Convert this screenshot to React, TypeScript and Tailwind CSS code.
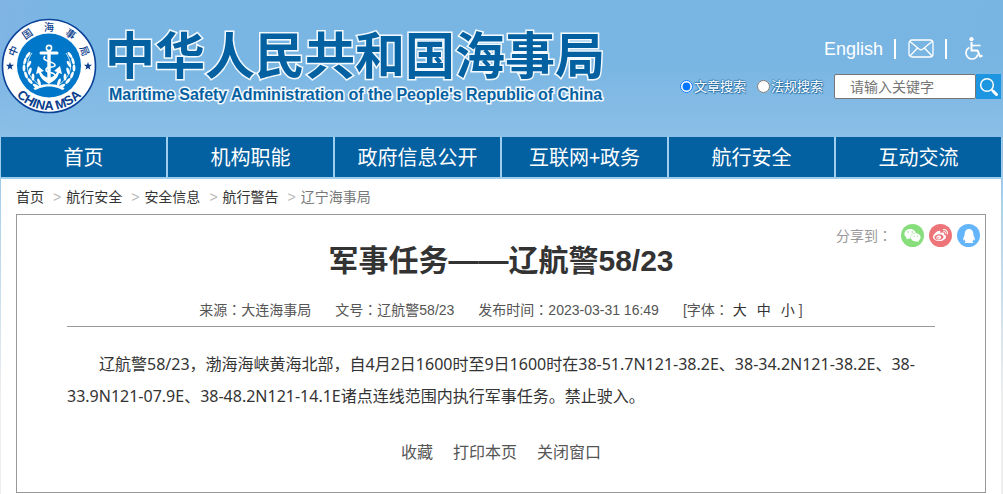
import { useState } from "react";
import { FaQq, FaWeibo, FaWeixin } from "react-icons/fa";

const NAV = ["首页", "机构职能", "政府信息公开", "互联网+政务", "航行安全", "互动交流"];

const CRUMBS = ["首页", "航行安全", "安全信息", "航行警告"];

const SHARES = [
  { label: "微信", icon: FaWeixin, className: "bg-[#88de7c]", size: 17 },
  { label: "微博", icon: FaWeibo, className: "bg-[#ed757a]", size: 15 },
  { label: "QQ", icon: FaQq, className: "bg-[#65b5fa]", size: 14 },
];

const RING_CHARS = [
  { char: "中", angle: -67 },
  { char: "国", angle: -34 },
  { char: "海", angle: 0 },
  { char: "事", angle: 34 },
  { char: "局", angle: 67 },
];

// leaves of the laurel, as x, y, rotation for the left half
const LEAVES = [
  [35, 68, -60],
  [29, 63, -40],
  [25, 57, -20],
  [23, 50, 0],
  [24, 43, 15],
  [27, 37, 35],
  [38, 64, -20],
  [32, 59, 0],
  [29, 53, 15],
  [28, 46, 30],
];

function Emblem() {
  return (
    <svg width="96" height="96" viewBox="0 0 96 96" aria-label="中国海事局" className="shrink-0">
      <circle cx="48" cy="48" r="46.5" fill="#fff" stroke="#0a4299" strokeWidth="1.6" />
      <circle cx="48" cy="47.5" r="32" fill="#0077c8" />
      {RING_CHARS.map((c) => (
        <text
          key={c.char}
          x="48"
          y="13"
          textAnchor="middle"
          fontSize="10"
          fontWeight="500"
          fill="#0a3d8c"
          fontFamily="'Noto Sans CJK SC', sans-serif"
          transform={`rotate(${c.angle} 48 48)`}
        >
          {c.char}
        </text>
      ))}
      <path id="ring" d="M4 48 A44 44 0 0 0 92 48" fill="none" />
      <text fontSize="13" fontWeight="700" fill="#0a3d8c" fontFamily="'Liberation Sans', Arial, sans-serif" textAnchor="middle">
        <textPath href="#ring" startOffset="50%">
          CHINA MSA
        </textPath>
      </text>
      <g fill="#0a3d8c">
        <path id="star" d="M9 44 L10 46.8 L13 46.8 L10.6 48.7 L11.5 51.7 L9 49.9 L6.5 51.7 L7.4 48.7 L5 46.8 L8 46.8 Z" />
        <use href="#star" x="78" />
      </g>
      <g id="laurel" fill="#fff">
        {LEAVES.map(([x, y, r]) => (
          <ellipse key={`${x}-${y}`} cx={x} cy={y} rx="1.4" ry="3.6" transform={`rotate(${r} ${x} ${y})`} />
        ))}
        <path d="M31 35 C22 48 27 60 40 68" fill="none" stroke="#fff" strokeWidth="0.8" />
      </g>
      <use href="#laurel" transform="translate(96 0) scale(-1 1)" />
      <g fill="none" stroke="#fff">
        <circle cx="48" cy="30" r="2.6" strokeWidth="1.6" />
        <path d="M40 35 H56" strokeWidth="3" strokeLinecap="round" />
        <path d="M48 33 V60" strokeWidth="3.4" />
        <path d="M44 38 C39 44 54 43 54 47 C54 51 45 47 45 52 C45 56 54 53 54 58" strokeWidth="1.6" />
        <path d="M33 71 C40 66 52 66 62 71 M63 71 C56 66 44 66 34 71" strokeWidth="2" />
      </g>
      <path d="M37 48 L35 56 L38 55 C40 62 44 63 48 66 C52 63 56 62 58 55 L61 56 L59 48 L53 53 L56 54 C54 58 51 59 48 60 C45 59 42 58 40 54 L43 53 Z" fill="#fff" />
    </svg>
  );
}

function MailIcon() {
  return (
    <svg width="26" height="20" viewBox="0 0 26 20" fill="none" stroke="#fff" strokeWidth="1.3">
      <rect x="1" y="1" width="24" height="17" rx="3" />
      <path d="M2 2.500 L11 10 Q13 11.500 15 10 L24 2.500 M2 17 L9.500 9 M24 17 L16.500 9" />
    </svg>
  );
}

function WheelchairIcon() {
  return (
    <svg width="18" height="23" viewBox="0 0 18 23" fill="none" stroke="#fff">
      <circle cx="6.500" cy="2.200" r="2.100" fill="#fff" stroke="none" />
      <path d="M6.500 5 V13.500 H12.500 L15 19.500 L17.500 18.500" strokeWidth="2" strokeLinejoin="round" />
      <path d="M6.500 8.500 H15.500" strokeWidth="1.6" />
      <path d="M4.500 10.500 A6 6 0 1 0 12.800 17.500" strokeWidth="1.6" />
    </svg>
  );
}

function SearchIcon() {
  return (
    <svg width="20" height="20" viewBox="0 0 20 20" fill="none" stroke="#fff">
      <circle cx="8" cy="8" r="6.300" strokeWidth="1.500" />
      <path d="M12.500 12.500 L14 14" strokeWidth="1.500" />
      <path d="M14 14 L17.500 17.500" strokeWidth="3" strokeLinecap="round" />
    </svg>
  );
}

// the TC face centres the full-width colon in its cell
function Colon() {
  return <span className="font-['Noto_Sans_CJK_TC',sans-serif] leading-none">：</span>;
}

function Header() {
  const [scope, setScope] = useState("article");

  const scopes = [
    { value: "article", label: "文章搜索" },
    { value: "law", label: "法规搜索" },
  ];

  return (
    <header className="flex h-[137px] items-start justify-between">
      <a href="#" className="flex pl-px pt-[18px]">
        <Emblem />
        <span className="ml-2 flex flex-col whitespace-nowrap pt-2 text-[#0360a1] [paint-order:stroke_fill]">
          <span className="font-['Noto_Sans_CJK_SC',sans-serif] text-[50px] font-bold leading-[52px] [-webkit-text-stroke:3px_#f4f9fd]">
            中华人民共和国海事局
          </span>
          <span className="pl-1 pt-[5px] text-[16px] font-bold leading-6 [-webkit-text-stroke:3px_#f4f9fd]">
            Maritime Safety Administration of the People's Republic of China
          </span>
        </span>
      </a>

      <div className="flex flex-col items-end pr-[2px] pt-[37px]">
        <div className="flex h-[23px] items-center pr-[18px] text-white">
          <a href="#" className="text-[18px] leading-[22px]">
            English
          </a>
          <span className="ml-[11px] h-5 w-[2px] bg-white" />
          <a href="#" aria-label="邮箱" className="ml-3">
            <MailIcon />
          </a>
          <span className="ml-[11px] h-5 w-[2px] bg-white" />
          <a href="#" aria-label="无障碍" className="ml-[18px]">
            <WheelchairIcon />
          </a>
        </div>

        <form className="mt-[14px] flex items-center" onSubmit={(e) => e.preventDefault()}>
          {scopes.map((s) => (
            <label
              key={s.value}
              className="mr-[11px] flex items-center gap-px text-[13px] leading-5 text-white [text-shadow:1px_1px_1px_#1d659c,-1px_0_1px_#3a80b4,0_-1px_1px_#3a80b4]"
            >
              <input
                type="radio"
                name="scope"
                value={s.value}
                checked={scope === s.value}
                onChange={() => setScope(s.value)}
                className="size-[13px]"
              />
              {s.label}
            </label>
          ))}
          <input
            type="text"
            aria-label="关键字"
            placeholder="请输入关键字"
            className="h-[25px] w-[142px] rounded-[2px] border border-[#767676] bg-white pl-[15px] text-[14px] text-[#333] placeholder:text-[#757575] focus:outline-none"
          />
          <button type="submit" aria-label="搜索" className="flex h-[25px] w-[25px] items-center justify-center bg-[#1d95e1]">
            <SearchIcon />
          </button>
        </form>
      </div>
    </header>
  );
}

export default function App() {
  return (
    <div className="min-h-screen bg-[linear-gradient(100deg,#80b4e5_0px,#79b6e3_60px,#78b5e2_100%)] font-['Liberation_Sans','Noto_Sans_CJK_SC',sans-serif]">
      <div className="min-h-screen bg-[linear-gradient(180deg,#78b5e200_0px,#78b5e200_60px,#8bbfe7_137px,#a9d0ec_200px,#eeeeee_400px)]">
        <Header />

        <nav className="mr-px grid grid-cols-6 gap-[2px] bg-[#9fcdee] pb-[2px] pl-px pr-px">
          {NAV.map((item) => (
            <a
              key={item}
              href="#"
              className="flex h-10 items-center justify-center bg-[#0360a1] font-['Noto_Sans_CJK_SC',sans-serif] text-[20px] leading-10 text-white"
            >
              {item}
            </a>
          ))}
        </nav>

        <main className="ml-px mr-[2px] min-h-[315px] bg-white px-[15px]">
          <div className="flex h-[35px] items-center pt-[2px] text-[14px] text-[#333]">
            {CRUMBS.map((c) => (
              <span key={c} className="flex items-center">
                <a href="#">{c}</a>
                <span className="ml-[9px] mr-[5px] text-[#bbb]">&gt;</span>
              </span>
            ))}
            <span className="text-[#777]">辽宁海事局</span>
          </div>

          <article className="border border-[#999] pb-[27px]">
            <div className="flex h-8 items-start justify-end pr-[5px] pt-[9px] text-[14px] leading-6 text-[#999]">
              <span className="mr-[9px]">
                分享到
                <Colon />
              </span>
              <div className="flex gap-[5px]">
                {SHARES.map(({ label, icon: Icon, className, size }) => (
                  <a
                    key={label}
                    href="#"
                    aria-label={label}
                    className={`flex size-[23px] items-center justify-center rounded-full text-white ${className}`}
                  >
                    <Icon size={size} />
                  </a>
                ))}
              </div>
            </div>

            <div className="px-[50px]">
              <h1 className="text-center text-[30px] font-bold leading-7 text-[#333]">军事任务——辽航警58/23</h1>

              <div className="mt-[25px] flex justify-center gap-6 border-b border-[#999] pb-[6px] text-[14px] leading-5 text-[#555]">
                <span>
                  来源
                  <Colon />
                  大连海事局
                </span>
                <span>
                  文号
                  <Colon />
                  辽航警58/23
                </span>
                <span>
                  发布时间
                  <Colon />
                  2023-03-31 16:49
                </span>
                <span className="flex items-center">
                  <span>
                    [字体
                    <Colon />
                  </span>
                  <span className="mx-1 flex gap-[10px] text-[#333]">
                    <button type="button">大</button>
                    <button type="button">中</button>
                    <button type="button">小</button>
                  </span>
                  ]
                </span>
              </div>

              <p className="mt-[21px] indent-8 font-['Noto_Sans','Noto_Sans_CJK_SC',sans-serif] text-[16px] leading-8 text-[#333]">
                辽航警58/23，渤海海峡黄海北部，自4月2日1600时至9日1600时在38-51.7N121-38.2E、38-34.2N121-38.2E、38-33.9N121-07.9E、38-48.2N121-14.1E诸点连线范围内执行军事任务。禁止驶入。
              </p>

              <div className="mt-[29px] flex justify-center gap-5 text-[16px] leading-6 text-[#555]">
                <button type="button">收藏</button>
                <button type="button">打印本页</button>
                <button type="button">关闭窗口</button>
              </div>
            </div>
          </article>
        </main>
      </div>
    </div>
  );
}
